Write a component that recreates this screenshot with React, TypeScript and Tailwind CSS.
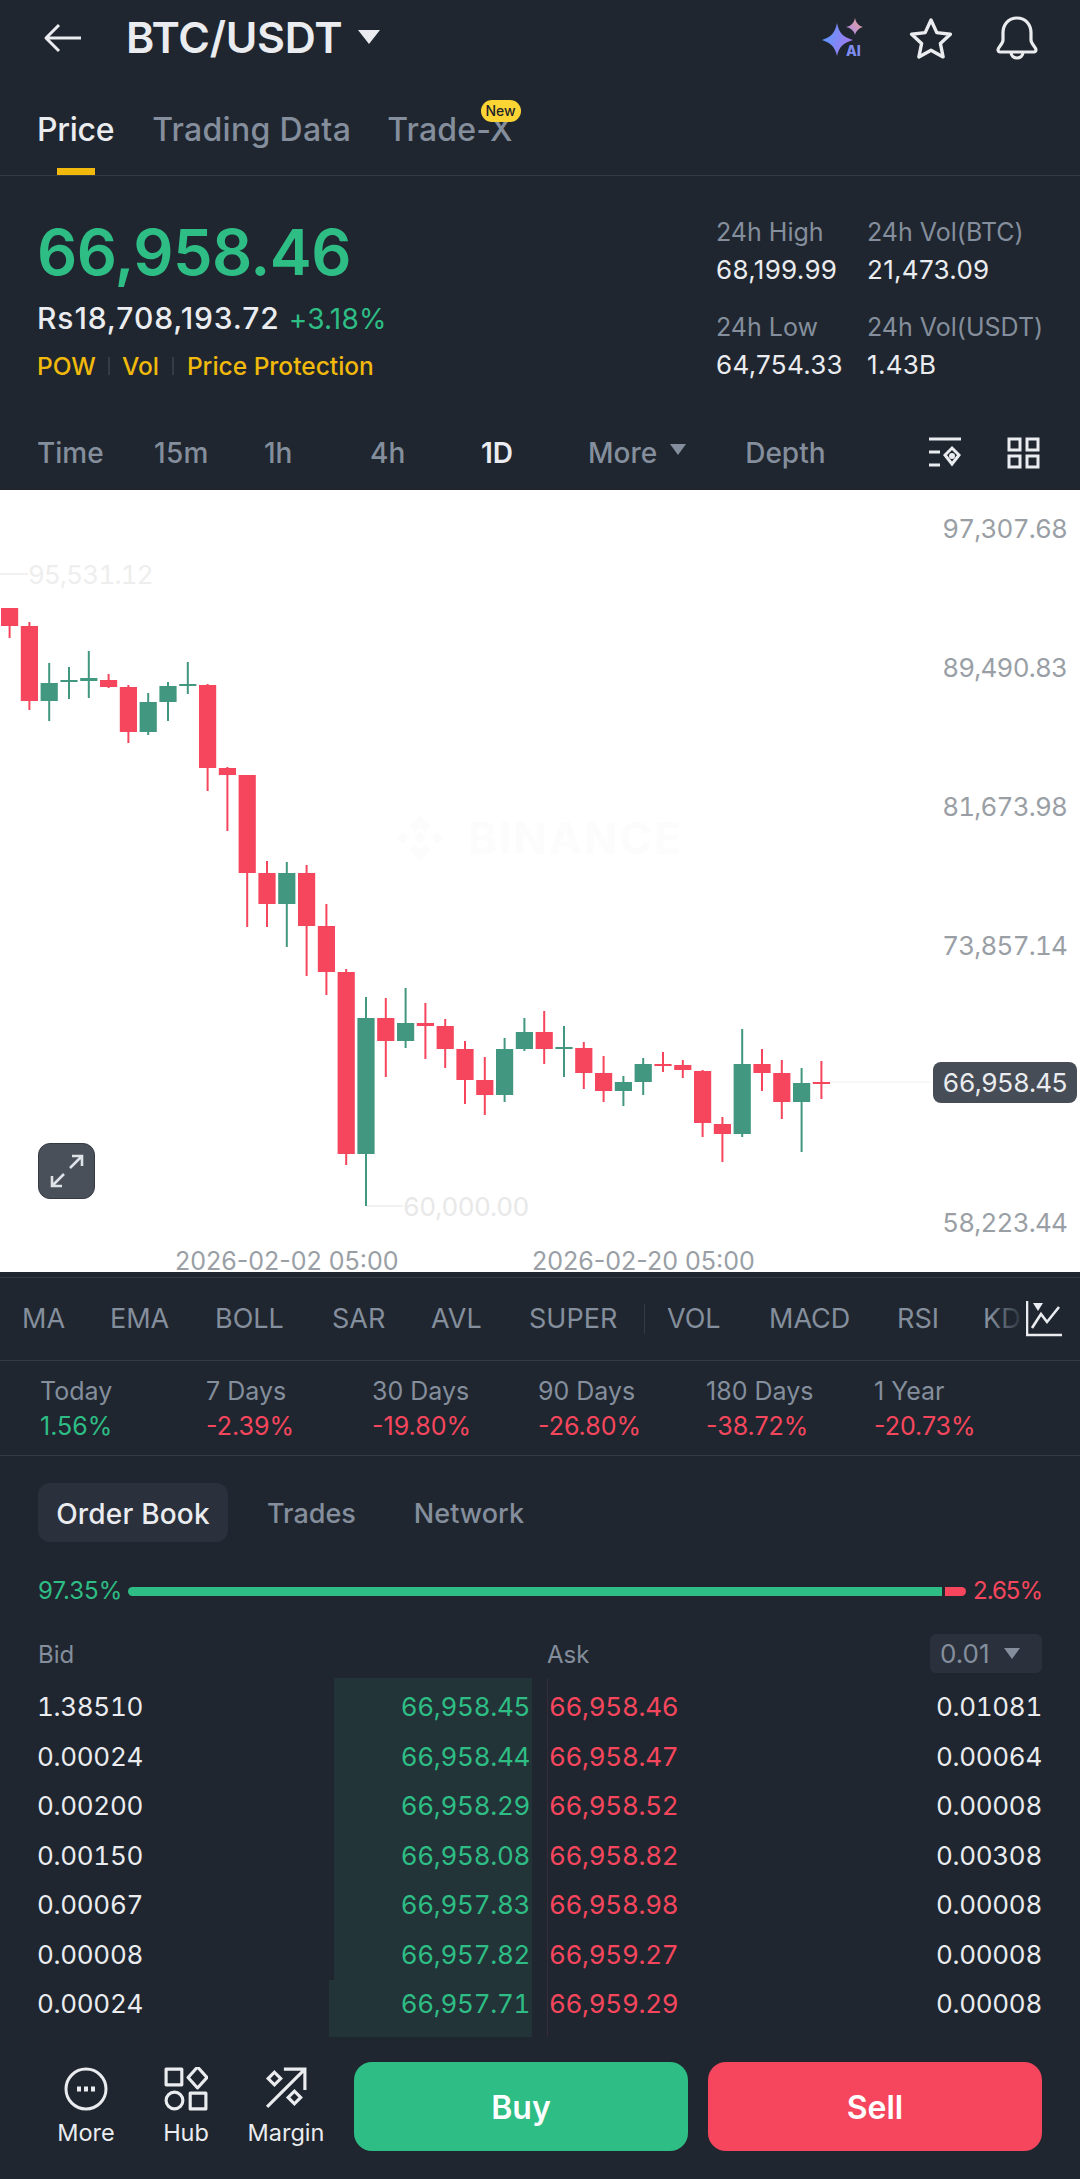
const FONT = 'font-["Inter","Noto_Sans",sans-serif]'

// high, body top, body bottom, low (page y)
const candles: [string, number, number, number, number][] = [
  ['r', 608, 608, 626, 638], ['r', 622, 626, 701, 710], ['g', 663, 683, 701, 721], ['g', 667, 680, 682, 699],
  ['g', 651, 678, 681, 698], ['r', 674, 680, 687, 688], ['r', 685, 687, 732, 743], ['g', 693, 702, 732, 735],
  ['g', 682, 686, 702, 721], ['g', 662, 684, 686, 694], ['r', 684, 685, 768, 791], ['r', 767, 768, 775, 831],
  ['r', 775, 775, 873, 927], ['r', 861, 873, 904, 927], ['g', 862, 873, 904, 947], ['r', 865, 873, 926, 976],
  ['r', 904, 926, 972, 995], ['r', 969, 972, 1154, 1165], ['g', 997, 1018, 1154, 1206], ['r', 998, 1018, 1041, 1077],
  ['g', 988, 1023, 1041, 1048], ['r', 1003, 1023, 1026, 1059], ['r', 1019, 1026, 1049, 1068], ['r', 1041, 1049, 1080, 1104],
  ['r', 1057, 1080, 1095, 1115], ['g', 1038, 1049, 1095, 1102], ['g', 1018, 1032, 1049, 1051], ['r', 1011, 1032, 1049, 1064],
  ['g', 1026, 1047, 1049, 1077], ['r', 1042, 1048, 1073, 1089], ['r', 1056, 1073, 1091, 1102], ['g', 1076, 1082, 1091, 1106],
  ['g', 1058, 1064, 1082, 1095], ['r', 1052, 1064, 1066, 1072], ['r', 1060, 1065, 1070, 1078], ['r', 1070, 1071, 1123, 1137],
  ['r', 1117, 1124, 1134, 1162], ['g', 1029, 1064, 1134, 1137], ['r', 1049, 1064, 1073, 1091], ['r', 1060, 1073, 1102, 1119],
  ['g', 1068, 1083, 1102, 1152], ['r', 1061, 1082, 1084, 1099],
]

const axis = [
  ['97,307.68', 38], ['89,490.83', 177], ['81,673.98', 316], ['73,857.14', 455], ['58,223.44', 732],
] as const

const rows = [
  ['1.38510', '66,958.45', '66,958.46', '0.01081'],
  ['0.00024', '66,958.44', '66,958.47', '0.00064'],
  ['0.00200', '66,958.29', '66,958.52', '0.00008'],
  ['0.00150', '66,958.08', '66,958.82', '0.00308'],
  ['0.00067', '66,957.83', '66,958.98', '0.00008'],
  ['0.00008', '66,957.82', '66,959.27', '0.00008'],
  ['0.00024', '66,957.71', '66,959.29', '0.00008'],
]

const periods = [
  ['Today', '1.56%', true], ['7 Days', '-2.39%', false], ['30 Days', '-19.80%', false],
  ['90 Days', '-26.80%', false], ['180 Days', '-38.72%', false], ['1 Year', '-20.73%', false],
] as const

const caret = 'border-x-transparent border-t-[#848e9c] border-x-[8px] border-t-[11px]'

function Chart() {
  return (
    <svg viewBox="0 0 1080 782" className="absolute inset-0 h-full w-full">
      <g fill="#fcfcfc" fontFamily="Inter, sans-serif" fontWeight="700" fontSize="44">
        <path d="M409 336l11-11 11 11-6 6-5-5-5 5zM397 348l6-6 6 6-6 6zM431 348l6-6 6 6-6 6zM414 348l6-6 6 6-6 6zM409 360l6-6 5 5 5-5 6 6-11 11z" />
        <text x="468" y="364" letterSpacing="2">BINANCE</text>
      </g>
      <line x1="0" y1="84" x2="28" y2="84" stroke="#ececec" strokeWidth="1.5" />
      <line x1="366" y1="716" x2="403" y2="716" stroke="#ececec" strokeWidth="1.5" />
      <line x1="830" y1="592" x2="930" y2="592" stroke="#f0f0f0" strokeWidth="1" />
      <g fontFamily="Inter, sans-serif" fontSize="26">
        <text x="28" y="94" fill="#eeeeee" letterSpacing="-0.8" className="tabular-nums">95,531.12</text>
        <text x="403" y="726" fill="#e8e8e8" letterSpacing="-0.7" className="tabular-nums">60,000.00</text>
        {axis.map(([label, y]) => (
          <text key={label} x="1067" y={y + 10} textAnchor="end" fill="#9a9fa6" letterSpacing="-0.8" className="tabular-nums">{label}</text>
        ))}
        <text x="175" y="780" fontSize="25" fill="#9a9fa6">2026-02-02 05:00</text>
        <text x="532" y="780" fontSize="25" fill="#9a9fa6">2026-02-20 05:00</text>
      </g>
      {candles.map(([c, high, top, bottom, low], i) => {
        const x = 9.6 + i * 19.8
        const color = c === 'r' ? '#f6465d' : '#41977f'
        return (
          <g key={i} fill={color}>
            <rect x={x - 1} y={high - 490} width="2" height={low - high} />
            <rect x={x - 8.6} y={top - 490} width="17.2" height={Math.max(bottom - top, 2)} />
          </g>
        )
      })}
    </svg>
  )
}

export default function App() {
  return (
    <div className={`${FONT} h-[2179px] w-[1080px] overflow-hidden bg-[#1f262f] text-[#eaecef]`}>
      {/* top bar */}
      <div className="flex h-[75px] items-center pl-[43px] pr-[42px]">
        <svg viewBox="0 0 38 30" className="h-[30px] w-[38px] fill-none stroke-[#eaecef] stroke-[3px]">
          <path d="M38 15H3M16 2L3 15l13 13" strokeLinejoin="round" />
        </svg>
        <span className="ml-[45px] text-[43px] font-semibold tracking-[-0.3px]">BTC/USDT</span>
        <span className="ml-[16px] mt-[-2px] border-x-[11px] border-t-[14px] border-x-transparent border-t-[#eaecef]" />
        <div className="ml-auto flex items-center">
          <svg viewBox="0 0 44 40" className="h-[40px] w-[44px]">
            <defs>
              <linearGradient id="ai" x1="0" y1="0" x2="1" y2="0.3">
                <stop offset="0" stopColor="#4f9bff" />
                <stop offset="1" stopColor="#a37bf0" />
              </linearGradient>
              <linearGradient id="ai2" x1="0" y1="1" x2="1" y2="0">
                <stop offset="0" stopColor="#a486f5" />
                <stop offset="1" stopColor="#f0a58c" />
              </linearGradient>
            </defs>
            <path d="M15 5C17 15 21 19 31 22 21 25 17 29 15 38 13 29 9 25 0 22 9 19 13 15 15 5Z" fill="url(#ai)" />
            <path d="M33 0C34 5 37 8 41 9 37 10 34 13 33 17 32 13 29 10 24 9 29 8 32 5 33 0Z" fill="url(#ai2)" />
            <text x="24" y="38" fontSize="14" fontWeight="800" fontFamily="Inter, sans-serif" fill="#7f8df0">AI</text>
          </svg>
          <svg viewBox="0 0 44 42" className="ml-[43px] h-[42px] w-[44px] fill-none stroke-[#eaecef] stroke-[3.4px]">
            <path d="M22 3l5.8 12.6 13.6 1.6-10 9.3 2.7 13.4L22 33.2 9.900 39.900l2.700-13.400-10-9.300 13.600-1.600z" strokeLinejoin="round" />
          </svg>
          <svg viewBox="0 0 42 44" className="ml-[43px] h-[44px] w-[42px] fill-none stroke-[#eaecef] stroke-[3.2px]">
            <path d="M21 2C12 2 7 9 7 17v7c0 4-5 7-5 10 0 1 1 2 2 2h34c1 0 2-1 2-2 0-3-5-6-5-10v-7C35 9 30 2 21 2ZM15 36c0 4 3 6 6 6s6-2 6-6" strokeLinejoin="round" />
          </svg>
        </div>
      </div>

      {/* page tabs */}
      <div className="relative flex h-[101px] items-start border-b border-[#343b47] pl-[37px] pt-[37px] text-[32px] font-medium leading-[36px] text-[#848e9c]">
        <span className="tracking-[-0.3px] text-[#eaecef]">Price</span>
        <span className="ml-[38px] tracking-[0.3px]">Trading Data</span>
        <span className="relative ml-[36px] tracking-[0.2px]">
          Trade-X
          <span className="absolute right-[-8px] top-[-12px] rounded-full bg-[#fcd535] px-[5px] text-[14px] leading-[22px] tracking-normal text-[#1e2329]">New</span>
        </span>
        <span className="absolute bottom-0 left-[57px] h-[7px] w-[38px] bg-[#f0b90b]" />
      </div>

      {/* ticker */}
      <div className="flex h-[244px] justify-between pl-[37px] pr-[38px]">
        <div>
          <div className="mt-[41px] text-[63px] font-semibold leading-[70px] tracking-[-0.6px] text-[#2ebd85]">66,958.46</div>
          <div className="mt-[13px] flex items-baseline leading-[36px]">
            <span className="text-[30px] font-medium tracking-[0.9px]">Rs18,708,193.72</span>
            <span className="ml-[9px] text-[28px] tracking-[0.2px] text-[#2ebd85]">+3.18%</span>
          </div>
          <div className="mt-[11px] flex items-center text-[24.5px] font-medium leading-[36px] text-[#f0b90b]">
            <span>POW</span>
            <span className="mx-[12px] h-[18px] w-[2px] bg-[#343b47]" />
            <span>Vol</span>
            <span className="mx-[13px] h-[18px] w-[2px] bg-[#343b47]" />
            <span>Price Protection</span>
          </div>
        </div>
        <div className="grid w-[326px] grid-cols-[151px_1fr] content-start whitespace-nowrap pt-[38px] text-[25px] leading-[36px]">
          <span className="text-[#848e9c]">24h High</span>
          <span className="text-[#848e9c]">24h Vol(BTC)</span>
          <span className="mt-[2px] text-[26px] tracking-[0.3px]">68,199.99</span>
          <span className="mt-[2px] text-[26px] tracking-[0.3px]">21,473.09</span>
          <span className="mt-[21px] text-[#848e9c]">24h Low</span>
          <span className="mt-[21px] text-[#848e9c]">24h Vol(USDT)</span>
          <span className="mt-[2px] text-[26px] tracking-[0.3px]">64,754.33</span>
          <span className="mt-[2px] text-[26px] tracking-[0.3px]">1.43B</span>
        </div>
      </div>

      {/* timeframes */}
      <div className="flex h-[70px] items-start pl-[37px] pr-[40px] pt-[15px] text-[28px] font-medium leading-[36px] text-[#848e9c]">
        <span className="w-[117px]">Time</span>
        <span className="w-[110px] tracking-[0.3px]">15m</span>
        <span className="w-[106px]">1h</span>
        <span className="w-[111px]">4h</span>
        <span className="w-[107px] font-semibold text-[#eaecef]">1D</span>
        <span>More</span>
        <span className={`ml-[13px] mt-[9px] ${caret}`} />
        <span className="ml-[59px]">Depth</span>
        <svg viewBox="0 0 36 32" className="ml-auto mt-[2px] h-[32px] w-[36px] fill-none stroke-[#eaecef] stroke-[3px]">
          <path d="M2 2h32M2 15h11M2 28h11M25 11l7 7-7 9-7-9z" />
          <circle cx="25" cy="19" r="1.500" />
        </svg>
        <svg viewBox="0 0 33 32" className="ml-[44px] mt-[2px] h-[32px] w-[33px] fill-none stroke-[#eaecef] stroke-[3px]">
          <path d="M2 2h11v11H2zM20 2h11v11H20zM2 19h11v11H2zM20 19h11v11H20z" />
        </svg>
      </div>

      {/* chart */}
      <div className="relative h-[782px] bg-white">
        <Chart />
        <div className="absolute left-[933px] top-[572px] flex h-[41px] w-[144px] items-center justify-center rounded-[8px] bg-[#474d57] text-[26px] tabular-nums tracking-[-0.8px] text-[#eaecef]">
          66,958.45
        </div>
        <div className="absolute left-[38px] top-[653px] flex h-[56px] w-[57px] items-center justify-center rounded-[12px] border border-[#343a44] bg-[#4a505a]">
          <svg viewBox="0 0 34 34" className="h-[34px] w-[34px] fill-none stroke-[#dfe3e8] stroke-[2.6px]">
            <path d="M20 14L32 2M22 2h10v10M14 20L2 32M2 22v10h10" />
          </svg>
        </div>
      </div>

      {/* indicators */}
      <div className="relative mt-[5px] flex h-[84px] items-center border-y border-[#343b47] text-[27px] text-[#848e9c]">
        <span className="absolute left-[22px]">MA</span>
        <span className="absolute left-[110px]">EMA</span>
        <span className="absolute left-[215px]">BOLL</span>
        <span className="absolute left-[332px]">SAR</span>
        <span className="absolute left-[431px]">AVL</span>
        <span className="absolute left-[529px]">SUPER</span>
        <span className="absolute left-[644px] h-[30px] w-px bg-[#343b47]" />
        <span className="absolute left-[667px]">VOL</span>
        <span className="absolute left-[769px]">MACD</span>
        <span className="absolute left-[897px]">RSI</span>
        <span className="absolute left-[983px]">KD</span>
        <span className="absolute left-[990px] h-[40px] w-[36px] bg-gradient-to-r from-transparent to-[#1f262f]" />
        <svg viewBox="0 0 36 36" className="absolute left-[1026px] h-[36px] w-[36px] fill-none stroke-[#eaecef] stroke-[2.6px]">
          <path d="M1 0v34h35M6 27l9-14 6 8 12-15" />
          <path d="M7 2h10l-5 8z" fill="#eaecef" stroke="none" />
        </svg>
      </div>

      {/* period change */}
      <div className="grid h-[95px] grid-cols-[166px_166px_166px_168px_168px_1fr] border-b border-[#343b47] pl-[40px] pt-[13px] text-[25px] leading-[35px]">
        {periods.map(([label, value, up]) => (
          <div key={label}>
            <div className="text-[#848e9c]">{label}</div>
            <div className={up ? 'text-[#2ebd85]' : 'text-[#f6465d]'}>{value}</div>
          </div>
        ))}
      </div>

      {/* order book */}
      <div className="px-[38px]">
        <div className="mt-[27px] flex h-[59px] items-center text-[27px] font-medium text-[#848e9c]">
          <span className="flex h-full w-[190px] items-center justify-center rounded-[12px] bg-[#2a313c] pt-[3px] text-[28px] tracking-[0.2px] text-[#eaecef]">Order Book</span>
          <span className="ml-[39px] pt-[3px]">Trades</span>
          <span className="ml-[58px] pt-[3px]">Network</span>
        </div>
        <div className="mt-[34px] flex h-[30px] items-center text-[24px]">
          <span className="w-[90px] text-[#2ebd85]">97.35%</span>
          <span className="h-[9px] w-[814px] rounded-l-full bg-[#2ebd85]" />
          <span className="ml-[3px] h-[9px] w-[21px] rounded-r-full bg-[#f6465d]" />
          <span className="ml-auto tracking-[-1px] text-[#f6465d]">2.65%</span>
        </div>
        <div className="mt-[28px] flex h-[39px] items-center text-[24px] text-[#848e9c]">
          <span className="w-[509px] pt-[2px]">Bid</span>
          <span className="pt-[2px]">Ask</span>
          <span className="ml-auto flex h-full w-[112px] items-center rounded-[6px] bg-[#2a313c] pl-[10px] text-[26px]">
            0.01
            <span className={`ml-[14px] ${caret}`} />
          </span>
        </div>
      </div>

      <div className="relative mt-[9px] h-[346.5px] px-[37px] text-[26px] tabular-nums tracking-[-0.3px]">
        <div className="absolute left-[334px] top-[-4px] h-[302px] w-[198px] bg-[#223438]" />
        <div className="absolute left-[329px] top-[298px] h-[57px] w-[203px] bg-[#223438]" />
        <div className="absolute left-[547px] top-[-4px] h-[359px] w-px bg-[#3a2b38]" />
        {rows.map(([bid, bidPrice, askPrice, ask], i) => (
          <div key={i} className="relative flex h-[49.5px] items-center pr-[1px]">
            <span className="w-[150px]">{bid}</span>
            <span className="w-[343px] text-right text-[#2ebd85]">{bidPrice}</span>
            <span className="ml-[19px] text-[#f6465d]">{askPrice}</span>
            <span className="ml-auto">{ask}</span>
          </div>
        ))}
      </div>

      {/* bottom actions */}
      <div className="mt-[33.5px] flex h-[89px] pl-[36px] pr-[38px]">
        <div className="flex w-[100px] flex-col items-center pt-[5px]">
          <svg viewBox="0 0 44 44" className="h-[44px] w-[44px] fill-none stroke-[#eaecef] stroke-[3px]">
            <circle cx="22" cy="22" r="20" />
            <path d="M13 22h4M20 22h4M27 22h4" strokeWidth="5" />
          </svg>
          <span className="mt-[6px] text-[23.5px] leading-[32px]">More</span>
        </div>
        <div className="flex w-[100px] flex-col items-center pt-[5px]">
          <svg viewBox="0 0 42 42" className="h-[44px] w-[44px] fill-none stroke-[#eaecef] stroke-[3px]">
            <path d="M2 2h15v15H2zM32 0l9 10-9 10-9-10zM25 25h15v15H25z" strokeLinejoin="round" />
            <circle cx="10" cy="32" r="8" />
          </svg>
          <span className="mt-[6px] text-[23.5px] leading-[32px]">Hub</span>
        </div>
        <div className="flex w-[100px] flex-col items-center pt-[5px]">
          <svg viewBox="0 0 40 40" className="h-[42px] w-[42px] fill-none stroke-[#eaecef] stroke-[3px]">
            <path d="M2 38L38 2M18 2h20v20" />
            <path d="M9 5l6 6-6 6-6-6zM28 23l6 6-6 6-6-6z" />
          </svg>
          <span className="mt-[8px] text-[23.5px] leading-[32px]">Margin</span>
        </div>
        <button className="ml-[18px] h-full w-[334px] rounded-[18px] bg-[#2ebd85] pt-[2px] text-[32px] font-semibold text-white">Buy</button>
        <button className="ml-[20px] h-full w-[334px] rounded-[18px] bg-[#f6465d] pt-[2px] text-[32px] font-semibold text-white">Sell</button>
      </div>
    </div>
  )
}
